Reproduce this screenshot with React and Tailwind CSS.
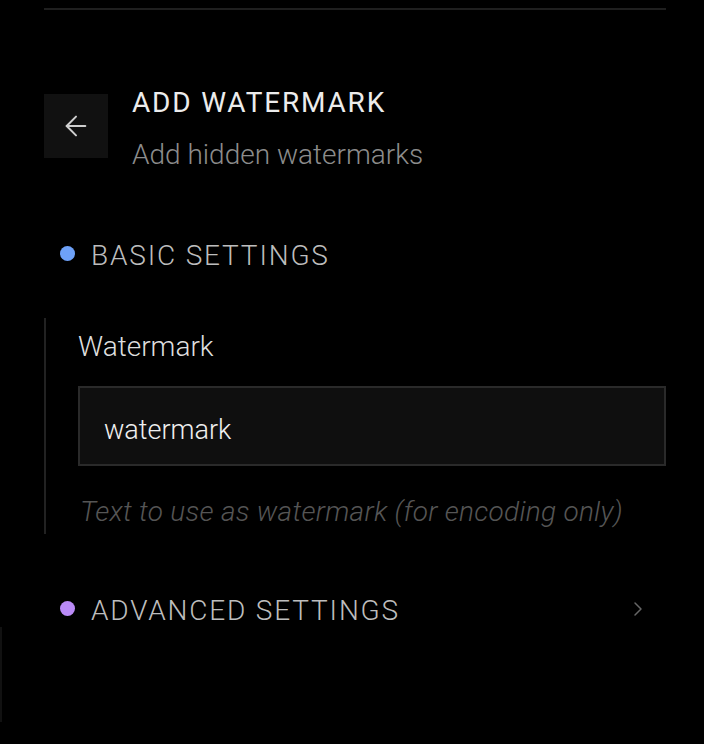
import { ArrowLeft, ChevronRight } from "lucide-react";

const SectionHeader = ({ dot, label, chevron }) => (
  <div className="flex items-center pl-4 pr-4 h-8">
    <span className={`w-[15px] h-[15px] rounded-full mb-[5px] ${dot}`} />
    <span className="ml-4 text-[28px] leading-8 font-light tracking-[0.065em] text-[#bdbdbd]">
      {label}
    </span>
    {chevron && (
      <ChevronRight size={24} strokeWidth={1.5} className="ml-auto mb-[5px] text-[#666]" />
    )}
  </div>
);

export default function App() {
  return (
    <div
      className="relative w-[704px] h-[744px] overflow-hidden bg-black pt-2 pl-[44px] pr-[38px]"
      style={{ fontFamily: "Roboto, 'Noto Sans', sans-serif" }}
    >
      <div className="absolute left-0 top-[627px] h-[95px] w-[2px] bg-[#111]" />

      <div className="border-t-2 border-[#1f1f1f]" />

      <div className="flex items-start gap-6 mt-[77px]">
        <button className="mt-[7px] w-16 h-16 flex items-center justify-center bg-[#111] text-[#cfcfcf]">
          <ArrowLeft size={32} strokeWidth={1.5} />
        </button>
        <div>
          <h1 className="text-[28px] leading-8 font-normal tracking-[0.065em] text-[#ececec]">
            ADD WATERMARK
          </h1>
          <p className="mt-5 text-[28px] leading-8 font-light text-[#8c8c8c]">
            Add hidden watermarks
          </p>
        </div>
      </div>

      <div className="mt-[69px]">
        <SectionHeader dot="bg-[#6ea1f8]" label="BASIC SETTINGS" />
      </div>

      <div className="mt-[46px] border-l-2 border-[#222] pl-8 pt-[13px] pb-[6px]">
        <label className="block text-[28px] leading-8 font-light text-[#dedede]">
          Watermark
        </label>
        <input
          defaultValue="watermark"
          className="mt-[23px] w-full h-20 px-6 pt-2 bg-[#0f0f0f] border-2 border-[#2a2a2a] text-[27px] font-light text-[#f0f0f0] outline-none"
        />
        <p className="mt-[30px] pl-[2px] text-[28px] leading-8 font-light italic tracking-[0.01em] text-[#555]">
          Text to use as watermark (for encoding only)
        </p>
      </div>

      <div className="mt-[61px]">
        <SectionHeader dot="bg-[#b98af6]" label="ADVANCED SETTINGS" chevron />
      </div>
    </div>
  );
}
